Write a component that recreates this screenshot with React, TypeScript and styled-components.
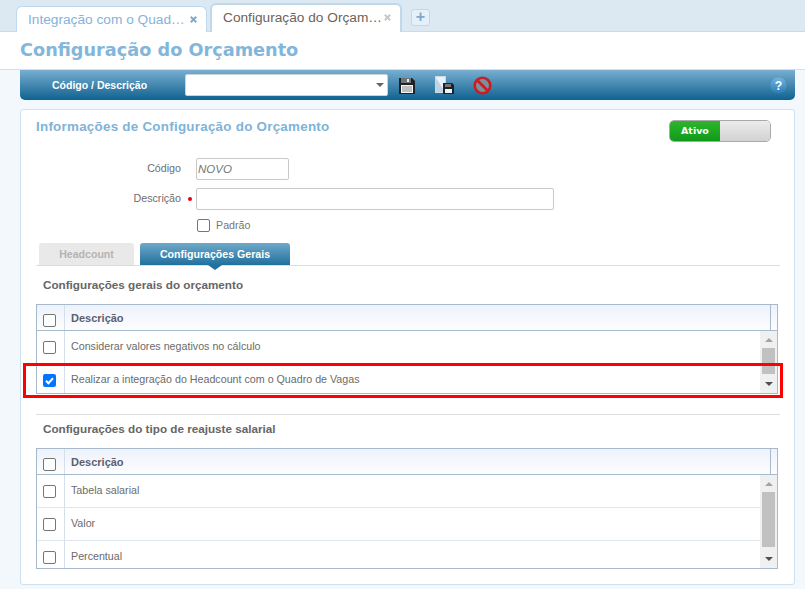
import React from "react";
import styled, { createGlobalStyle } from "styled-components";

const GlobalStyle = createGlobalStyle`
  html, body {
    margin: 0;
    padding: 0;
    background: #f3f8fc;
    overflow: hidden;
  }
  * {
    box-sizing: border-box;
  }
  body {
    font-family: "Liberation Sans", Arial, sans-serif;
    color: #6a6a6a;
  }
`;

const Page = styled.div`
  width: 805px;
  height: 589px;
  overflow: hidden;
`;

const TabStrip = styled.div`
  height: 32px;
  background: #dce8f2;
  display: flex;
  align-items: flex-end;
  padding-left: 16px;
  gap: 3px;
  border-bottom: 1px solid #c6dbeb;
`;

const BrowserTab = styled.div<{ $active?: boolean }>`
  width: ${(p) => (p.$active ? "192px" : "191px")};
  height: ${(p) => (p.$active ? "29px" : "26px")};
  margin-bottom: -1px;
  background: #fff;
  border: ${(p) => (p.$active ? "2px" : "1px")} solid #c0d8ec;
  border-bottom: 0;
  border-radius: 6px 6px 0 0;
  display: flex;
  align-items: center;
  padding: ${(p) => (p.$active ? "0 9px 3px 11px" : "0 9px 1px 11px")};
  font-size: 13.7px;
  color: ${(p) => (p.$active ? "#6f6257" : "#85b3d9")};
  white-space: nowrap;
`;

const TabLabel = styled.span`
  flex: 1;
  min-width: 0;
`;

const AddTab = styled.div`
  width: 19px;
  height: 17px;
  margin: 0 0 5px 6px;
  border: 1px solid #c0d8ec;
  border-radius: 3px;
  background: #e6f0f8;
  color: #7fa9cf;
  font-size: 16px;
  font-weight: bold;
  line-height: 14px;
  text-align: center;
`;

const HeaderBar = styled.div`
  height: 38px;
  background: #fff;
  border-bottom: 1px solid #d5dfe7;
  padding-left: 20px;
`;

const PageTitle = styled.h1`
  margin: 0;
  font-family: "DejaVu Sans", Verdana, sans-serif;
  font-size: 17.7px;
  line-height: 37px;
  font-weight: bold;
  color: #82b6da;
`;

const Toolbar = styled.div`
  height: 30px;
  margin: 0 10px 0 20px;
  background: linear-gradient(#78aed0, #0f6290);
  border-radius: 0 0 5px 5px;
  display: flex;
  align-items: center;
  padding: 0 8px 0 32px;
`;

const ToolbarLabel = styled.div`
  width: 133px;
  font-size: 10.5px;
  font-weight: bold;
  color: #fff;
`;

const SelectBox = styled.div`
  width: 203px;
  height: 22px;
  background: #fff;
  border: 1px solid #c9d3da;
  border-radius: 2px;
  display: flex;
  align-items: center;
  justify-content: flex-end;
  padding-right: 3px;
`;

const Caret = styled.span`
  width: 0;
  height: 0;
  border-left: 4px solid transparent;
  border-right: 4px solid transparent;
  border-top: 4px solid #666;
`;

const ToolIcon = styled.svg<{ $gap: number }>`
  display: block;
  margin-left: ${(p) => p.$gap}px;
`;

const Spacer = styled.div`
  flex: 1;
`;

const Panel = styled.section`
  height: 476px;
  margin: 9px 10px 0 20px;
  background: #fff;
  border: 1px solid #cfe0ee;
  border-radius: 3px;
  padding: 10px 15px 0;
  position: relative;
`;

const PanelHead = styled.div`
  display: flex;
  justify-content: space-between;
  align-items: flex-start;
  height: 38px;
`;

const PanelTitle = styled.h2`
  margin: 0;
  font-size: 13.4px;
  line-height: 14px;
  font-weight: bold;
  color: #7fb3d8;
  letter-spacing: 0.25px;
`;

const Toggle = styled.div`
  width: 102px;
  height: 22px;
  margin: 0 8px 0 0;
  border: 1px solid #aaa;
  border-radius: 5px;
  display: flex;
  overflow: hidden;
`;

const ToggleOn = styled.div`
  width: 50px;
  background: linear-gradient(#2cb62c, #119a1a);
  color: #fff;
  font-family: "DejaVu Sans", Verdana, sans-serif;
  font-size: 9.5px;
  font-weight: bold;
  line-height: 20px;
  padding-left: 11px;
`;

const ToggleOff = styled.div`
  flex: 1;
  background: linear-gradient(#ececec, #d2d2d2);
`;

const FormRow = styled.div`
  display: flex;
  align-items: center;
  height: 22px;
  margin-bottom: 8px;
`;

const FieldLabel = styled.label`
  width: 145px;
  padding-bottom: 2px;
  text-align: right;
  font-size: 10.7px;
  color: #6e6e6e;
`;

const Required = styled.span<{ $show?: boolean }>`
  width: 15px;
  display: flex;
  justify-content: center;
  padding-left: 3px;
  &::before {
    content: "";
    width: 4px;
    height: 4px;
    border-radius: 50%;
    background: ${(p) => (p.$show ? "#e8000f" : "transparent")};
  }
`;

const TextInput = styled.div<{ $width: number }>`
  width: ${(p) => p.$width}px;
  height: 22px;
  border: 1px solid #c9c9c9;
  border-radius: 2px;
  background: #fff;
  font-size: 11.5px;
  font-style: italic;
  line-height: 20px;
  padding-left: 1px;
  color: #777;
`;

const CheckRow = styled.div`
  display: flex;
  align-items: center;
  gap: 6px;
  margin-left: 161px;
  height: 14px;
  font-size: 10.7px;
  color: #777;
`;

const Check = styled.span<{ $checked?: boolean }>`
  width: 13px;
  height: 13px;
  flex: none;
  border: ${(p) => (p.$checked ? "0" : "1px solid #767676")};
  border-radius: 2px;
  background: ${(p) => (p.$checked ? "#0075ff" : "#fff")};
  display: block;
  svg {
    display: block;
  }
`;

const SubTabs = styled.div`
  display: flex;
  gap: 6px;
  margin: 11px -1px 0 0;
  height: 23px;
  padding-left: 3px;
  border-bottom: 1px solid #dcdcdc;
`;

const SubTab = styled.div<{ $active?: boolean }>`
  width: ${(p) => (p.$active ? "150px" : "95px")};
  height: 22px;
  border-radius: 3px 3px 0 0;
  background: ${(p) =>
    p.$active ? "linear-gradient(#6fa9ca, #20719d)" : "#e9e9e9"};
  color: ${(p) => (p.$active ? "#fff" : "#b4b4b4")};
  font-size: 10.6px;
  font-weight: bold;
  line-height: 22px;
  text-align: center;
  position: relative;
  ${(p) =>
    p.$active &&
    `&::after {
      content: "";
      position: absolute;
      left: 68px;
      top: 22px;
      border-left: 7px solid transparent;
      border-right: 7px solid transparent;
      border-top: 5px solid #20719d;
    }`}
`;

const SectionTitle = styled.h3<{ $top: number }>`
  margin: ${(p) => p.$top}px 0 0;
  padding-left: 7px;
  font-size: 11.7px;
  line-height: 14px;
  font-weight: bold;
  color: #666;
`;

const GridBox = styled.div<{ $height: number }>`
  width: 742px;
  height: ${(p) => p.$height}px;
  border: 1px solid #a9b9cc;
  margin-top: 12px;
  display: flex;
  flex-direction: column;
  background: #fff;
`;

const GridHead = styled.div`
  height: 26px;
  flex: none;
  display: flex;
  align-items: stretch;
  background: linear-gradient(#edf2fb, #fdfdfe);
  border-bottom: 1px solid #a9b9cc;
  font-size: 11px;
  font-weight: bold;
  color: #5b5f70;
`;

const CheckCell = styled.div<{ $head?: boolean }>`
  width: 28px;
  flex: none;
  display: flex;
  align-items: center;
  justify-content: center;
  padding: ${(p) => (p.$head ? "6px" : "1px")} 2px 0 0;
  border-right: 1px solid #d5dfec;
`;

const HeadLabel = styled.div`
  flex: 1;
  padding-left: 6px;
  line-height: 26px;
`;

const ScrollCorner = styled.div`
  width: 7px;
  flex: none;
  border-left: 1px solid #a9b9cc;
`;

const GridBody = styled.div`
  flex: 1;
  min-height: 0;
  display: flex;
`;

const Rows = styled.div`
  flex: 1;
  min-width: 0;
  overflow: hidden;
`;

const Row = styled.div`
  height: 33px;
  display: flex;
  align-items: stretch;
  border-bottom: 1px solid #dfe6ee;
  font-size: 10.7px;
  color: #6b6b6b;
`;

const RowText = styled.div`
  flex: 1;
  padding: 0 0 2px 6px;
  display: flex;
  align-items: center;
`;

const ScrollTrack = styled.div`
  width: 17px;
  flex: none;
  background: #f0f0f0;
  display: flex;
  flex-direction: column;
  align-items: center;
`;

const ScrollArrow = styled.span<{ $up?: boolean }>`
  width: 0;
  height: 0;
  flex: none;
  margin: ${(p) => (p.$up ? "7px 0 6px" : "0 0 7px")};
  border-left: 4px solid transparent;
  border-right: 4px solid transparent;
  ${(p) =>
    p.$up ? "border-bottom: 4px solid #a3a3a3;" : "border-top: 4px solid #505050;"}
`;

const ScrollThumb = styled.div<{ $height: number }>`
  width: 13px;
  height: ${(p) => p.$height}px;
  flex: none;
  margin-bottom: auto;
  background: #c1c1c1;
`;

const Divider = styled.hr`
  margin: 20px -1px 0 0;
  border: 0;
  border-top: 1px solid #dcdcdc;
`;

const Highlight = styled.div`
  position: absolute;
  left: 2px;
  top: 253px;
  width: 760px;
  height: 35px;
  border: 3px solid #f00;
  pointer-events: none;
`;

const Tick = () => (
  <svg width="13" height="13" viewBox="0 0 13 13">
    <path d="M3 6.8l2.4 2.4L10 4.2" fill="none" stroke="#fff" strokeWidth="2" />
  </svg>
);

const CloseX = ({ color }: { color: string }) => (
  <svg width="7" height="7" viewBox="0 0 7 7">
    <path d="M0.8 0.8l5.4 5.4M6.2 0.8L0.8 6.2" stroke={color} strokeWidth="2" />
  </svg>
);

const Floppy = ({ gap }: { gap: number }) => (
  <ToolIcon $gap={gap} width="16" height="17" viewBox="0 0 16 17">
    <path d="M0 1h13l3 3v13H0z" fill="#1d2226" />
    <rect x="2" y="1" width="10" height="5" fill="#6d7378" />
    <rect x="8" y="2" width="2" height="3" fill="#e8e8e8" />
    <rect x="2" y="8" width="12" height="8" fill="#f4f4f4" />
    <path d="M3 10h10M3 12h10M3 14h10" stroke="#8a8a8a" />
  </ToolIcon>
);

const SaveCopy = ({ gap }: { gap: number }) => (
  <ToolIcon $gap={gap} width="19" height="18" viewBox="0 0 19 18">
    <rect x="0.5" y="0.5" width="10" height="16" fill="#e9f2fa" stroke="#c9d8e4" />
    <path d="M1 16V2l9 14z" fill="#bfd3e2" />
    <path d="M8 7h9l2 2v9H8z" fill="#1d2226" />
    <rect x="10" y="8" width="6" height="3" fill="#777" />
    <rect x="10" y="13" width="7" height="4" fill="#f2f2f2" />
  </ToolIcon>
);

const Cancel = ({ gap }: { gap: number }) => (
  <ToolIcon $gap={gap} width="19" height="19" viewBox="0 0 19 19">
    <circle cx="9.5" cy="9.5" r="7.8" fill="#7f8f9c" stroke="#c91d24" strokeWidth="2.6" />
    <path d="M4.2 4.2l10.6 10.6" stroke="#c91d24" strokeWidth="2.8" />
  </ToolIcon>
);

const Help = () => (
  <svg width="17" height="17" viewBox="0 0 18 18">
    <defs>
      <linearGradient id="helpFill" x1="0" y1="0" x2="0" y2="1">
        <stop offset="0" stopColor="#72b4e0" />
        <stop offset="1" stopColor="#2a7bb8" />
      </linearGradient>
    </defs>
    <circle cx="9" cy="9" r="8.5" fill="url(#helpFill)" />
    <text
      x="9"
      y="13.5"
      textAnchor="middle"
      fontSize="13"
      fontWeight="bold"
      fontFamily="Liberation Sans, sans-serif"
      fill="#fff"
    >
      ?
    </text>
  </svg>
);

const Grid = ({
  height,
  thumb,
  rows,
}: {
  height: number;
  thumb: number;
  rows: { text: string; checked?: boolean }[];
}) => (
  <GridBox $height={height}>
    <GridHead>
      <CheckCell $head>
        <Check />
      </CheckCell>
      <HeadLabel>Descrição</HeadLabel>
      <ScrollCorner />
    </GridHead>
    <GridBody>
      <Rows>
        {rows.map((row) => (
          <Row key={row.text}>
            <CheckCell>
              <Check $checked={row.checked}>{row.checked && <Tick />}</Check>
            </CheckCell>
            <RowText>{row.text}</RowText>
          </Row>
        ))}
      </Rows>
      <ScrollTrack>
        <ScrollArrow $up />
        <ScrollThumb $height={thumb} />
        <ScrollArrow />
      </ScrollTrack>
    </GridBody>
  </GridBox>
);

const App: React.FC = () => {
  return (
    <Page>
      <GlobalStyle />
      <TabStrip>
        <BrowserTab>
          <TabLabel>Integração com o Quad…</TabLabel>
          <CloseX color="#7fa9cf" />
        </BrowserTab>
        <BrowserTab $active>
          <TabLabel>Configuração do Orçam…</TabLabel>
          <CloseX color="#c8c8c8" />
        </BrowserTab>
        <AddTab>+</AddTab>
      </TabStrip>
      <HeaderBar>
        <PageTitle>Configuração do Orçamento</PageTitle>
      </HeaderBar>
      <Toolbar>
        <ToolbarLabel>Código / Descrição</ToolbarLabel>
        <SelectBox>
          <Caret />
        </SelectBox>
        <Floppy gap={11} />
        <SaveCopy gap={20} />
        <Cancel gap={19} />
        <Spacer />
        <Help />
      </Toolbar>
      <Panel>
        <PanelHead>
          <PanelTitle>Informações de Configuração do Orçamento</PanelTitle>
          <Toggle>
            <ToggleOn>Ativo</ToggleOn>
            <ToggleOff />
          </Toggle>
        </PanelHead>
        <FormRow>
          <FieldLabel>Código</FieldLabel>
          <Required />
          <TextInput $width={93}>NOVO</TextInput>
        </FormRow>
        <FormRow>
          <FieldLabel>Descrição</FieldLabel>
          <Required $show />
          <TextInput $width={358} />
        </FormRow>
        <CheckRow>
          <Check />
          Padrão
        </CheckRow>
        <SubTabs>
          <SubTab>Headcount</SubTab>
          <SubTab $active>Configurações Gerais</SubTab>
        </SubTabs>
        <SectionTitle $top={12}>Configurações gerais do orçamento</SectionTitle>
        <Grid
          height={90}
          thumb={26}
          rows={[
            { text: "Considerar valores negativos no cálculo" },
            {
              text: "Realizar a integração do Headcount com o Quadro de Vagas",
              checked: true,
            },
          ]}
        />
        <Divider />
        <SectionTitle $top={7}>
          Configurações do tipo de reajuste salarial
        </SectionTitle>
        <Grid
          height={121}
          thumb={55}
          rows={[
            { text: "Tabela salarial" },
            { text: "Valor" },
            { text: "Percentual" },
          ]}
        />
        <Highlight />
      </Panel>
    </Page>
  );
};

export default App;
